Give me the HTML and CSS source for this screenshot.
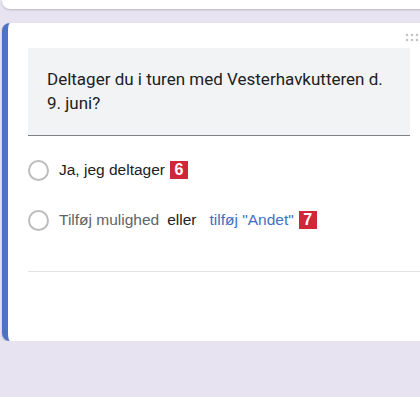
FILE: index.html
```html
<!DOCTYPE html>
<html lang="da">
<head>
  <meta charset="UTF-8">
  <meta name="viewport" content="width=device-width, initial-scale=1.0">
  <title>Spørgsmål</title>
  <link rel="stylesheet" href="styles.css">
</head>
<body>
  <div class="prev-card"></div>

  <div class="question-card">
    <div class="drag-handle">
      <svg width="18" height="9" viewBox="0 0 18 9">
        <circle cx="2" cy="2" r="1.3" fill="#c4c4c4"/>
        <circle cx="7" cy="2" r="1.3" fill="#c4c4c4"/>
        <circle cx="12" cy="2" r="1.3" fill="#c4c4c4"/>
        <circle cx="17" cy="2" r="1.3" fill="#c4c4c4"/>
        <circle cx="2" cy="7" r="1.3" fill="#c4c4c4"/>
        <circle cx="7" cy="7" r="1.3" fill="#c4c4c4"/>
        <circle cx="12" cy="7" r="1.3" fill="#c4c4c4"/>
        <circle cx="17" cy="7" r="1.3" fill="#c4c4c4"/>
      </svg>
    </div>

    <div class="question-title">Deltager du i turen med Vesterhavkutteren d. 9. juni?</div>

    <div class="option">
      <span class="radio"></span>
      <span class="option-text">Ja, jeg deltager</span>
      <span class="badge">6</span>
    </div>

    <div class="option">
      <span class="radio"></span>
      <span class="add-option">Tilføj mulighed</span>
      <span class="or">eller</span>
      <span class="add-other">tilføj "Andet"</span>
      <span class="badge">7</span>
    </div>

    <div class="divider"></div>
  </div>
</body>
</html>
```

FILE: styles.css
```css
body {
    margin: 0;
    background: #e7e3f0;
    font-family: "Liberation Sans", Arial, sans-serif;
    overflow: hidden;
}

.prev-card {
    margin-left: 2px;
    margin-right: -20px;
    height: 9px;
    background: white;
    border-radius: 0 0 8px 8px;
    box-shadow: 0 1px 2px rgba(60, 64, 67, 0.25);
}

.question-card {
    margin: 14px -20px 0 2px;
    height: 318px;
    box-sizing: border-box;
    background: white;
    border-left: 6px solid #4b73c6;
    border-radius: 8px;
    box-shadow: 0 1px 2px rgba(60, 64, 67, 0.35);
    padding-left: 20px;
}

.drag-handle {
    height: 25px;
    display: flex;
    justify-content: flex-end;
    padding-top: 10px;
    box-sizing: border-box;
    padding-right: 17px;
}

.question-title {
    width: 382px;
    box-sizing: border-box;
    background: #f1f3f5;
    border-bottom: 1px solid #7d8084;
    padding: 19px 20px 20px 19px;
    font-family: Roboto, sans-serif;
    font-size: 17px;
    line-height: 24px;
    color: #202124;
}

.option {
    height: 50px;
    display: flex;
    align-items: center;
    font-size: 15.5px;
    color: #202124;
}

.question-title + .option {
    margin-top: 9px;
}

.radio {
    width: 17px;
    height: 17px;
    border: 2px solid #bdbdbd;
    border-radius: 50%;
    margin-left: 0;
    margin-right: 10px;
    flex-shrink: 0;
}

.add-option {
    color: #5f6368;
}

.or {
    margin-left: 8px;
}

.add-other {
    color: #3f6fc2;
    margin-left: 13px;
}

.badge {
    margin-left: 5px;
    width: 18px;
    height: 18px;
    background: #d0263a;
    color: white;
    font-weight: bold;
    font-size: 16px;
    display: flex;
    align-items: center;
    justify-content: center;
}

.divider {
    margin-top: 26px;
    height: 1px;
    background: #e3e3e3;
}
```
